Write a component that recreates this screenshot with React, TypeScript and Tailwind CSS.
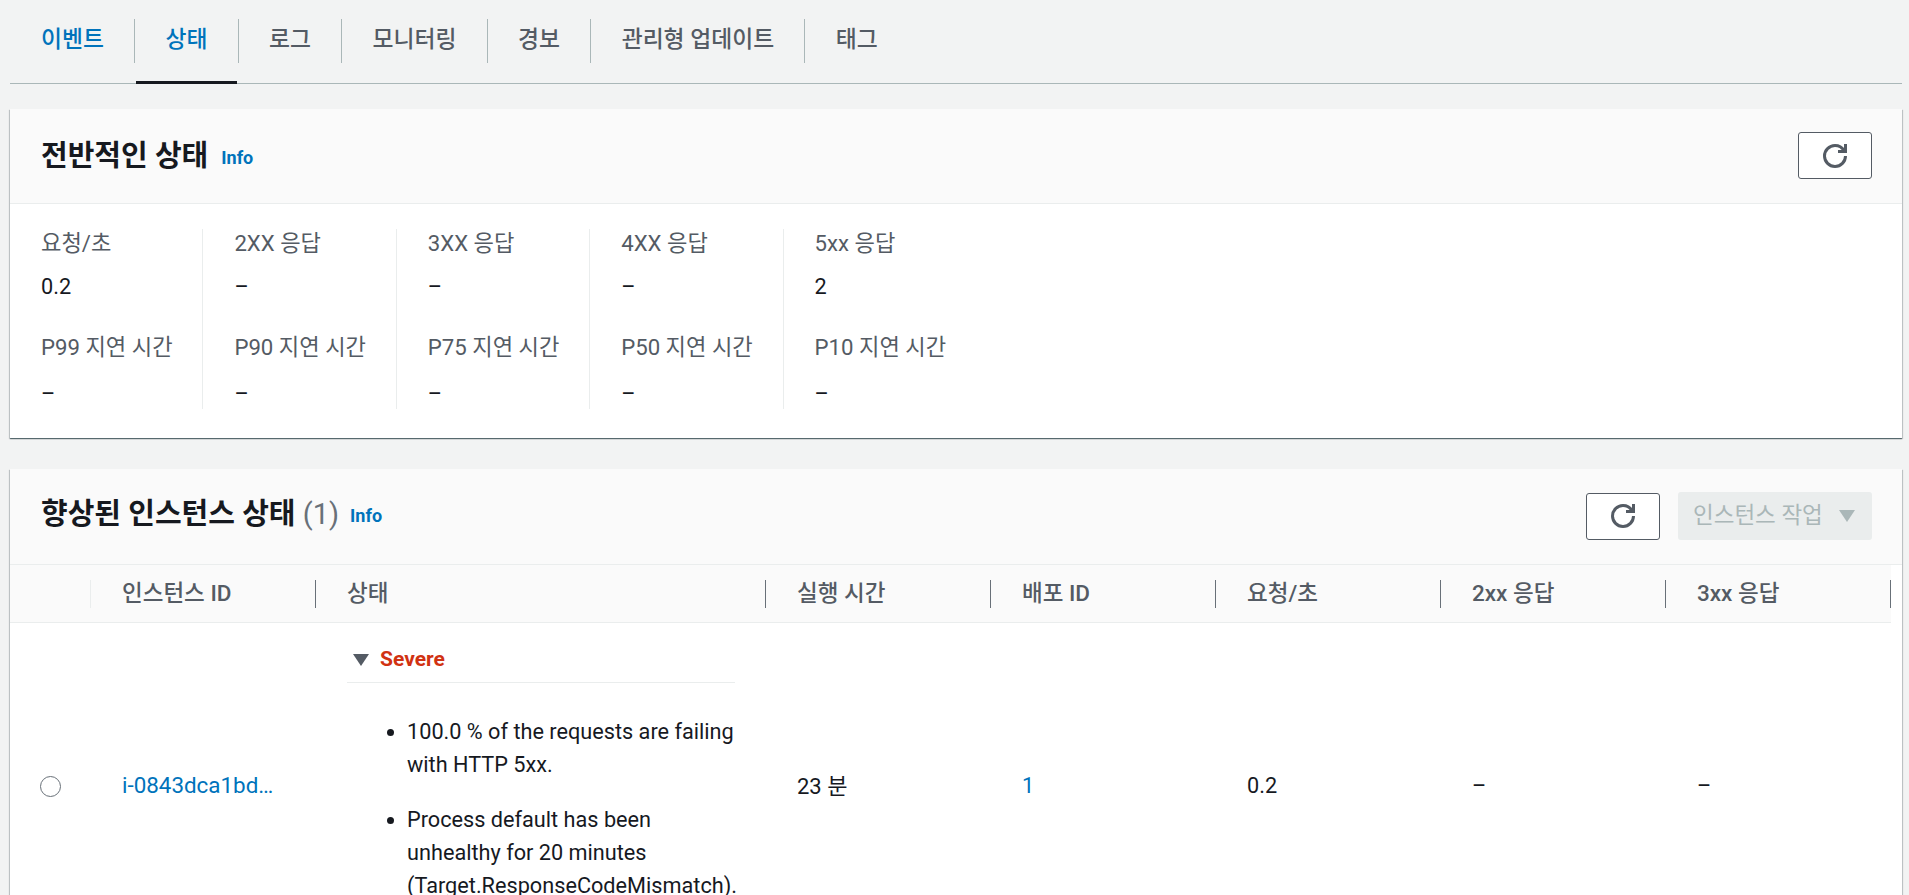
const font = { fontFamily: 'Roboto, "Noto Sans CJK KR", sans-serif' };

const tabs = ["이벤트", "상태", "로그", "모니터링", "경보", "관리형 업데이트", "태그"];

const stats = [
  ["요청/초", "0.2", "P99 지연 시간", "–"],
  ["2XX 응답", "–", "P90 지연 시간", "–"],
  ["3XX 응답", "–", "P75 지연 시간", "–"],
  ["4XX 응답", "–", "P50 지연 시간", "–"],
  ["5xx 응답", "2", "P10 지연 시간", "–"],
];

const columns = ["인스턴스 ID", "상태", "실행 시간", "배포 ID", "요청/초", "2xx 응답", "3xx 응답"];

function RefreshIcon() {
  return (
    <svg viewBox="0 0 16 16" className="h-6 w-6 fill-none stroke-[#545b64] stroke-2">
      <path d="M10 5h5V0" />
      <path d="M15 8a6.99 6.99 0 0 1-7 7 6.99 6.99 0 0 1-7-7 6.99 6.99 0 0 1 7-7 6.99 6.99 0 0 1 6 3.38" />
    </svg>
  );
}

function Caret({ className }: { className: string }) {
  return (
    <svg viewBox="0 0 16 12" className={className}>
      <path d="M0 0h16L8 12z" />
    </svg>
  );
}

function RefreshButton() {
  return (
    <button className="flex h-[47px] w-[74px] items-center justify-center rounded-[3px] border border-[#545b64] bg-white">
      <RefreshIcon />
    </button>
  );
}

function Card({ children, className }: { children: React.ReactNode; className: string }) {
  return (
    <div className={`bg-white shadow-[0_1px_1px_0_rgba(0,28,36,0.5),1px_1px_1px_0_rgba(0,28,36,0.15),-1px_1px_1px_0_rgba(0,28,36,0.15)] ${className}`}>
      {children}
    </div>
  );
}

export default function App() {
  return (
    <div style={font} className="h-[895px] overflow-hidden bg-[#f2f3f3] pl-[10px] pr-[7px] text-[21.7px] text-[#16191f]">
      <div className="flex h-[84px] border-b-[1.5px] border-[#aab7b8]">
        {tabs.map((tab, i) => (
          <div key={tab} className="flex h-[84px] flex-col">
            <div
              className={`mt-[19px] flex h-[44px] items-center px-[30.3px] pb-[2px] text-[22.8px] font-medium ${
                i > 0 ? "border-l-[1.5px] border-[#aab7b8]" : "pl-[31px]"
              } ${i < 2 ? "text-[#0073bb]" : "text-[#545b64]"}`}
            >
              {tab}
            </div>
            {i === 1 && <div className="mt-auto ml-[2px] mr-[1px] h-[3.5px] bg-[#16191f]" />}
          </div>
        ))}
      </div>

      <Card className="mt-[25px] h-[329px]">
        <div className="flex h-[95px] items-center justify-between border-b-[1.5px] border-[#eaeded] bg-[#fafafa] pb-[1px] pl-[31px] pr-[30px]">
          <div className="flex items-center gap-[13px]">
            <h2 className="text-[29px] font-bold leading-[40px]">전반적인 상태</h2>
            <a className="mt-[3px] text-[18px] font-bold text-[#0073bb]">Info</a>
          </div>
          <RefreshButton />
        </div>
        <div className="flex pt-[25px]">
          {stats.map((s) => (
            <div key={s[0]} className="h-[180px] w-[193.4px] border-r-[1.5px] border-[#eaeded] pl-[31px] last:border-r-0">
              <div className="flex h-[30px] items-center whitespace-nowrap text-[22.2px] text-[#545b64]">{s[0]}</div>
              <div className="mt-[13px] flex h-[30px] items-center">{s[1]}</div>
              <div className="mt-[31px] flex h-[30px] items-center whitespace-nowrap text-[22.2px] text-[#545b64]">{s[2]}</div>
              <div className="mt-[16px] flex h-[30px] items-center">{s[3]}</div>
            </div>
          ))}
        </div>
      </Card>

      <Card className="mt-[31px] h-[600px]">
        <div className="flex h-[96px] justify-between border-b-[1.5px] border-[#eaeded] bg-[#fafafa] pl-[31px] pr-[30px]">
          <div className="flex items-center gap-[11px] pb-[6px]">
            <h2 className="text-[29px] font-bold leading-[40px]">
              향상된 인스턴스 상태 <span className="font-normal text-[#687078]">(1)</span>
            </h2>
            <a className="mt-[3px] text-[18px] font-bold text-[#0073bb]">Info</a>
          </div>
          <div className="flex items-center gap-[18px] self-start pt-[23px]">
            <RefreshButton />
            <button className="flex h-[48px] w-[194px] items-center justify-between rounded-[3px] bg-[#eaeded] pl-[15px] pr-[17px] text-[22.5px] text-[#aab7b8]">
              인스턴스 작업
              <Caret className="h-3 w-4 fill-[#aab7b8]" />
            </button>
          </div>
        </div>

        <div className="grid grid-cols-[81px_225px_450px_225px_225px_225px_225px_225px] overflow-hidden">
          <div className="col-span-full grid h-[58px] grid-cols-subgrid items-center border-b-[1.5px] border-[#eaeded] bg-[#fafafa] text-[22.5px] font-medium text-[#545b64]">
            <div className="h-[28px] border-r-[1.5px] border-[#eaeded]" />
            {columns.map((c) => (
              <div key={c} className="flex h-[28px] items-center border-r-[1.5px] border-[#687078] pl-[31px] whitespace-nowrap">
                {c}
              </div>
            ))}
          </div>

          <div className="col-span-full grid h-[326px] grid-cols-subgrid items-center">
            <div className="pl-[30px]">
              <div className="h-[21px] w-[21px] rounded-full border-[1.5px] border-[#687078]" />
            </div>
            <a className="pl-[31px] whitespace-nowrap text-[22.4px] text-[#0073bb]">i-0843dca1bd…</a>
            <div className="self-start pl-[31px] pr-[31px]">
              <div className="mt-[20px] flex h-[40px] items-center gap-[11px] border-b-[1.5px] border-[#eaeded] pb-[6px] text-[21px] font-bold text-[#d13212]">
                <Caret className="ml-[6px] h-3 w-4 fill-[#545b64]" />
                Severe
              </div>
              <ul className="mt-[32px] list-disc space-y-[22px] pl-[60px] leading-[33px]">
                <li>100.0 % of the requests are failing with HTTP 5xx.</li>
                <li>Process default has been unhealthy for 20 minutes (Target.ResponseCodeMismatch).</li>
              </ul>
            </div>
            <div className="pl-[31px] text-[22px]">23 분</div>
            <a className="pl-[31px] text-[#0073bb]">1</a>
            <div className="pl-[31px]">0.2</div>
            <div className="pl-[31px]">–</div>
            <div className="pl-[31px]">–</div>
          </div>
        </div>
      </Card>
    </div>
  );
}
